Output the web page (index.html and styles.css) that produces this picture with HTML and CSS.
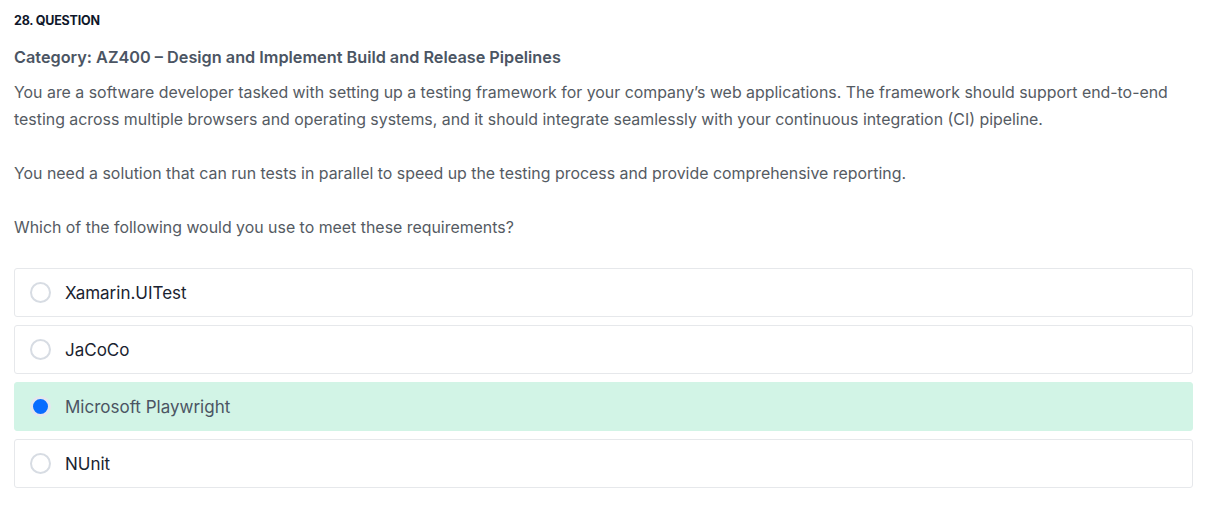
FILE: index.html
```html
<!DOCTYPE html>
<html lang="en">
<head>
<meta charset="utf-8">
<title>Question 28</title>
<link rel="stylesheet" href="styles.css">
</head>
<body>
<div class="quiz">
  <div class="q-num">28. QUESTION</div>
  <div class="q-cat">Category: AZ400 – Design and Implement Build and Release Pipelines</div>
  <div class="q-text">
    <p>You are a software developer tasked with setting up a testing framework for your company’s web applications. The framework should support end-to-end testing across multiple browsers and operating systems, and it should integrate seamlessly with your continuous integration (CI) pipeline.</p>
    <p>You need a solution that can run tests in parallel to speed up the testing process and provide comprehensive reporting.</p>
    <p>Which of the following would you use to meet these requirements?</p>
  </div>
  <ul class="options">
    <li class="option"><span class="radio"></span><span class="opt-label">Xamarin.UITest</span></li>
    <li class="option"><span class="radio"></span><span class="opt-label">JaCoCo</span></li>
    <li class="option selected"><span class="radio"></span><span class="opt-label">Microsoft Playwright</span></li>
    <li class="option"><span class="radio"></span><span class="opt-label">NUnit</span></li>
  </ul>
</div>
</body>
</html>
```
FILE: styles.css
```css
html, body {
  margin: 0;
  padding: 0;
  background: #ffffff;
}
body {
  font-family: Inter, "Open Sans", sans-serif;
}
.quiz {
  padding: 13px 14px 0 14px;
  width: 1179px;
}
.q-num {
  font-size: 12.5px;
  font-weight: 700;
  color: #0f172a;
  line-height: 16px;
  letter-spacing: -0.2px;
}
.q-cat {
  margin-top: 16px;
  font-size: 16.25px;
  font-weight: 600;
  color: #4b5563;
  line-height: 24px;
}
.q-text {
  margin-top: 10px;
  font-size: 15.9px;
  color: #555b63;
  line-height: 27px;
}
.q-text p {
  margin: 0 0 27px 0;
}
.options {
  list-style: none;
  margin: 0;
  padding: 0;
  display: flex;
  flex-direction: column;
  gap: 8px;
}
.option {
  display: flex;
  align-items: center;
  gap: 14px;
  height: 49px;
  box-sizing: border-box;
  padding-left: 15px;
  border: 1px solid #e6e8eb;
  border-radius: 3px;
  font-size: 17px;
  color: #1a2330;
}
.radio {
  width: 21px;
  height: 21px;
  box-sizing: border-box;
  border: 2px solid #d7dce3;
  border-radius: 50%;
  background: #fff;
  flex: none;
}
.option.selected {
  background: #d2f4e6;
  border-color: #d2f4e6;
  color: #4b5563;
}
.option.selected .radio {
  background: #0a6cff;
  border: 3px solid #e4e7ee;
}
```
